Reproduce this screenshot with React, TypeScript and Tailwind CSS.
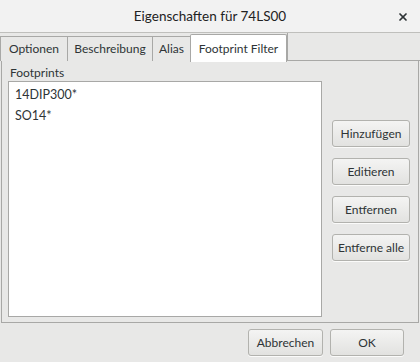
import { X } from "lucide-react";

const TABS = [
  { label: "Optionen", w: "w-[67px]" },
  { label: "Beschreibung", w: "w-[85px]" },
  { label: "Alias", w: "w-[38px]" },
  { label: "Footprint Filter", w: "w-[97px]" },
];
const ACTIVE = "Footprint Filter";
const FOOTPRINTS = ["14DIP300*", "SO14*"];
const ACTIONS = ["Hinzufügen", "Editieren", "Entfernen", "Entferne alle"];

function Button({ label, className = "" }: { label: string; className?: string }) {
  return (
    <button
      type="button"
      className={
        "flex items-center justify-center rounded-[3px] border border-[#b2b2ae] bg-gradient-to-b from-[#f4f4f3] to-[#e2e2e0] text-[#2e3436] shadow-[0_1px_0_rgba(255,255,255,0.8)] " +
        className
      }
    >
      {label}
    </button>
  );
}

export default function App() {
  return (
    <div className="flex h-[362px] w-[420px] flex-col bg-[#e8e8e7] font-['Lato','Liberation_Sans',sans-serif] text-[12px] text-[#2e3436]">
      {/* title bar */}
      <header className="relative flex h-[33px] shrink-0 items-center justify-center border-b border-[#bfbfbc] bg-[#f2f2f2]">
        <span className="text-[13.5px] text-[#222]">Eigenschaften für 74LS00</span>
        <X aria-hidden className="absolute right-[11px] top-[11px] size-[12px]" strokeWidth={3.5} />
      </header>

      {/* tabs */}
      <div className="flex h-[28px] shrink-0 items-end">
        {TABS.map(({ label, w }) =>
          label === ACTIVE ? (
            <div
              key={label}
              className={
                "-mb-px flex h-[28px] items-center justify-center rounded-t-[2px] border border-b-0 border-[#a8a8a6] bg-white " +
                w
              }
            >
              {label}
            </div>
          ) : (
            <div
              key={label}
              className={
                "flex h-[25px] items-center justify-center border-l border-t border-[#a8a8a6] " + w
              }
            >
              {label}
            </div>
          )
        )}
        <div className="h-[28px] flex-1 border-b border-l border-[#a8a8a6]" />
      </div>

      {/* page */}
      <div className="mx-px flex h-[262px] shrink-0 gap-[10px] border border-t-0 border-[#a8a8a6] pl-[6px] pr-[8px] pt-[3px]">
        <div className="flex w-[314px] flex-col">
          <span className="h-[17px] pl-[2px] leading-[17px]">Footprints</span>
          <ul className="h-[236px] border border-[#a8a8a6] bg-white pt-[2px] text-[12.5px]">
            {FOOTPRINTS.map((fp) => (
              <li key={fp} className="px-[6px] leading-[21px]">
                {fp}
              </li>
            ))}
          </ul>
        </div>
        <div className="flex flex-1 flex-col gap-[11px] pt-[56px]">
          {ACTIONS.map((a) => (
            <Button key={a} label={a} className="h-[27px] w-[78px]" />
          ))}
        </div>
      </div>

      {/* footer */}
      <div className="flex flex-1 items-start justify-end gap-[7px] pr-[16px] pt-[6px]">
        <Button label="Abbrechen" className="h-[27px] w-[75px]" />
        <Button label="OK" className="h-[27px] w-[74px]" />
      </div>
    </div>
  );
}
